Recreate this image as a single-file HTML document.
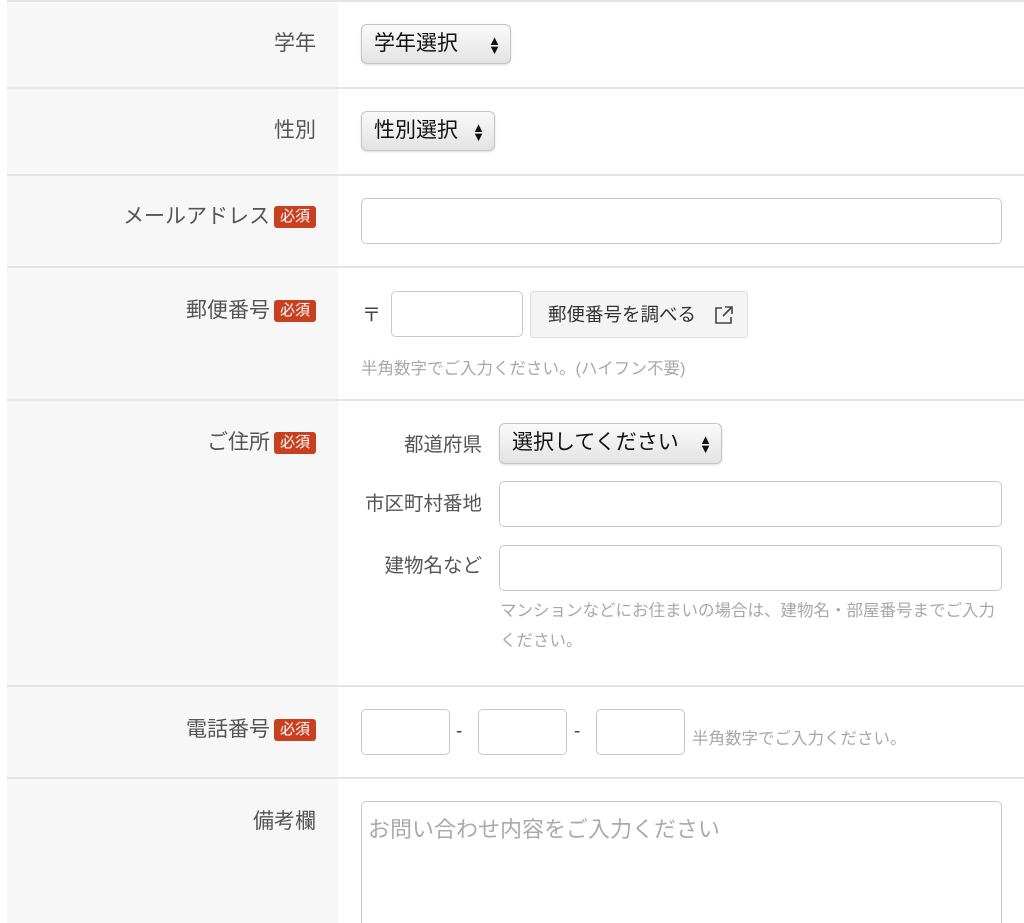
<!DOCTYPE html>
<html style="overflow:hidden;height:923px"><head><meta charset="utf-8"><style>
body{margin:0;width:1024px;height:923px;overflow:hidden;background:#fff;font-family:"Liberation Sans","Noto Sans CJK JP",sans-serif;position:relative}
.a{position:absolute}
.lc{position:absolute;left:7px;width:331px;top:0;height:923px;background:#f7f7f7}
.hr{position:absolute;left:7px;right:0;height:2px;background:#e4e4e4}
.lbl{position:absolute;font-size:21px;color:#555;white-space:nowrap;line-height:26px}
.r{right:708px;text-align:right}
.req{display:inline-block;background:#c8401f;color:#fff;font-size:15px;line-height:22px;padding:0 6px;border-radius:3px;margin-left:4px;vertical-align:2px}
.sel{position:absolute;border:1px solid #c4c4c4;border-radius:6px;background:linear-gradient(#fafafa,#e3e3e3);box-shadow:0 1px 2px rgba(0,0,0,.15);font-size:21px;color:#111;box-sizing:border-box;padding-left:12px;line-height:38px}
.sel .ar{position:absolute;right:9px;top:0;font-size:13px;line-height:9px;padding-top:11px}
.in{position:absolute;border:1px solid #c9c9c9;border-radius:5px;background:#fff;box-sizing:border-box}
.hint{position:absolute;font-size:16.5px;color:#a8a8a8;white-space:nowrap}
</style></head><body>
<div class="lc"></div>
<div class="hr" style="top:0"></div>
<div class="hr" style="top:87px"></div>
<div class="hr" style="top:174px"></div>
<div class="hr" style="top:266px"></div>
<div class="hr" style="top:399px"></div>
<div class="hr" style="top:685px"></div>
<div class="hr" style="top:777px"></div>

<div class="lbl r" style="top:31px">学年</div>
<div class="sel" style="left:361px;top:24px;width:150px;height:40px">学年選択<span class="ar">▲<br>▼</span></div>

<div class="lbl r" style="top:118px">性別</div>
<div class="sel" style="left:361px;top:111px;width:134px;height:40px">性別選択<span class="ar">▲<br>▼</span></div>

<div class="lbl r" style="top:204px">メールアドレス<span class="req">必須</span></div>
<div class="in" style="left:361px;top:198px;width:641px;height:46px"></div>

<div class="lbl r" style="top:298px">郵便番号<span class="req">必須</span></div>
<div class="a" style="left:362px;top:300px;font-size:19px;color:#444">〒</div>
<div class="in" style="left:391px;top:291px;width:132px;height:46px"></div>
<div class="a" style="left:530px;top:291px;width:218px;height:47px;box-sizing:border-box;border:1px solid #ddd;border-radius:3px;background:#f4f4f4;font-size:18.5px;color:#333;line-height:45px;padding-left:17px">郵便番号を調べる
<svg width="22" height="22" viewBox="0 0 22 22" style="position:absolute;right:12px;top:12px" fill="none" stroke="#444" stroke-width="1.6"><path d="M9 4H3v15h15v-6M12 3h7v7M19 3l-9 9"/></svg></div>
<div class="hint" style="left:361px;top:355px">半角数字でご入力ください。(ハイフン不要)</div>

<div class="lbl r" style="top:430px">ご住所<span class="req">必須</span></div>
<div class="lbl" style="right:542px;top:432px;font-size:19.5px">都道府県</div>
<div class="sel" style="left:499px;top:423px;width:223px;height:41px">選択してください<span class="ar">▲<br>▼</span></div>
<div class="lbl" style="right:542px;top:491px;font-size:19.5px">市区町村番地</div>
<div class="in" style="left:499px;top:481px;width:503px;height:46px"></div>
<div class="lbl" style="right:542px;top:553px;font-size:19.5px">建物名など</div>
<div class="in" style="left:499px;top:545px;width:503px;height:46px"></div>
<div class="hint" style="left:500px;top:596px;line-height:30px">マンションなどにお住まいの場合は、建物名・部屋番号までご入力<br>ください。</div>

<div class="lbl r" style="top:717px">電話番号<span class="req">必須</span></div>
<div class="in" style="left:361px;top:709px;width:89px;height:46px"></div>
<div class="a" style="left:456px;top:721px;font-size:19px;color:#444">-</div>
<div class="in" style="left:478px;top:709px;width:89px;height:46px"></div>
<div class="a" style="left:574px;top:721px;font-size:19px;color:#444">-</div>
<div class="in" style="left:596px;top:709px;width:89px;height:46px"></div>
<div class="hint" style="left:692px;top:725px">半角数字でご入力ください。</div>

<div class="lbl r" style="top:809px">備考欄</div>
<div class="in" style="left:361px;top:801px;width:641px;height:140px"></div>
<div class="a" style="left:368px;top:812px;font-size:22px;color:#aaa">お問い合わせ内容をご入力ください</div>
</body></html>
